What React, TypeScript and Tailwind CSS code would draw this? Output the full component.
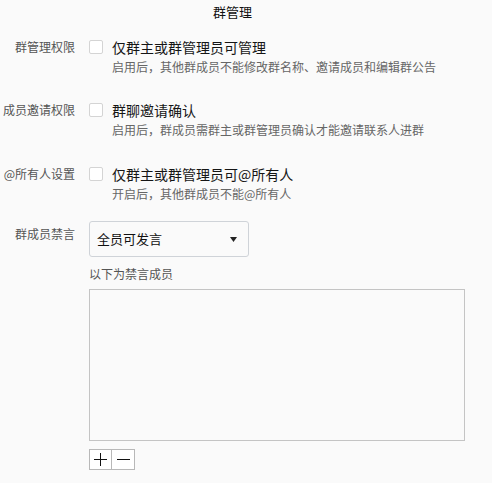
import React from "react";

function Row({
  label,
  main,
  sub,
  className,
}: {
  label: string;
  main: string;
  sub: string;
  className?: string;
}) {
  return (
    <div className={"flex items-start " + (className ?? "")}>
      <div className="w-[75px] shrink-0 text-right text-[12px] leading-[20px] text-[#555555] whitespace-nowrap">
        {label}
      </div>
      <div className="ml-[14px] mt-[3px] h-[14px] w-[14px] shrink-0 rounded-[2px] border border-[#d4d4d4] bg-white" />
      <div className="ml-[9px] flex flex-col">
        <div className="text-[14px] leading-[20px] text-[#151515] whitespace-nowrap">{main}</div>
        <div className="mt-[1px] text-[12px] leading-[18px] text-[#666666] whitespace-nowrap">{sub}</div>
      </div>
    </div>
  );
}

export default function App() {
  return (
    <div className="h-[483px] w-[492px] overflow-hidden bg-[#fafafa] font-['Noto_Sans_CJK_SC',sans-serif]">
      <div className="w-[465px] pt-[2px] text-center text-[13px] leading-[20px] text-[#111111]">群管理</div>
      <Row
        className="mt-[15px]"
        label="群管理权限"
        main="仅群主或群管理员可管理"
        sub="启用后，其他群成员不能修改群名称、邀请成员和编辑群公告"
      />
      <Row
        className="mt-[24px]"
        label="成员邀请权限"
        main="群聊邀请确认"
        sub="启用后，群成员需群主或群管理员确认才能邀请联系人进群"
      />
      <Row
        className="mt-[25px]"
        label="@所有人设置"
        main="仅群主或群管理员可@所有人"
        sub="开启后，其他群成员不能@所有人"
      />
      <div className="mt-[18px] flex items-start">
        <div className="mt-[3px] w-[75px] shrink-0 text-right text-[12px] leading-[20px] text-[#555555] whitespace-nowrap">
          群成员禁言
        </div>
        <div className="ml-[14px] flex flex-col">
          <div className="flex h-[36px] w-[160px] items-center justify-between rounded-[3px] border border-[#cfd3d8] bg-[#fafafa] pl-[7px] pr-[11px]">
            <span className="text-[13px] leading-[18px] text-[#111111]">全员可发言</span>
            <svg width="7" height="5" viewBox="0 0 7 5">
              <polygon points="0,0 7,0 3.5,5" fill="#222" />
            </svg>
          </div>
          <div className="mt-[8px] text-[12px] leading-[18px] text-[#555555]">以下为禁言成员</div>
          <div className="mt-[6px] h-[152px] w-[376px] border border-[#c4c4c4] bg-[#fafafa]" />
          <div className="mt-[8px] flex">
            <div className="flex h-[21px] w-[23px] items-center justify-center border border-[#b8b8b8] bg-white">
              <svg width="13" height="13" viewBox="0 0 13 13">
                <line x1="0" y1="6.5" x2="13" y2="6.5" stroke="#111" strokeWidth="1" />
                <line x1="6.5" y1="0" x2="6.5" y2="13" stroke="#111" strokeWidth="1" />
              </svg>
            </div>
            <div className="flex h-[21px] w-[23px] items-center justify-center border border-l-0 border-[#b8b8b8] bg-white">
              <svg width="13" height="13" viewBox="0 0 13 13">
                <line x1="0" y1="6.5" x2="13" y2="6.5" stroke="#111" strokeWidth="1" />
              </svg>
            </div>
          </div>
        </div>
      </div>
    </div>
  );
}
